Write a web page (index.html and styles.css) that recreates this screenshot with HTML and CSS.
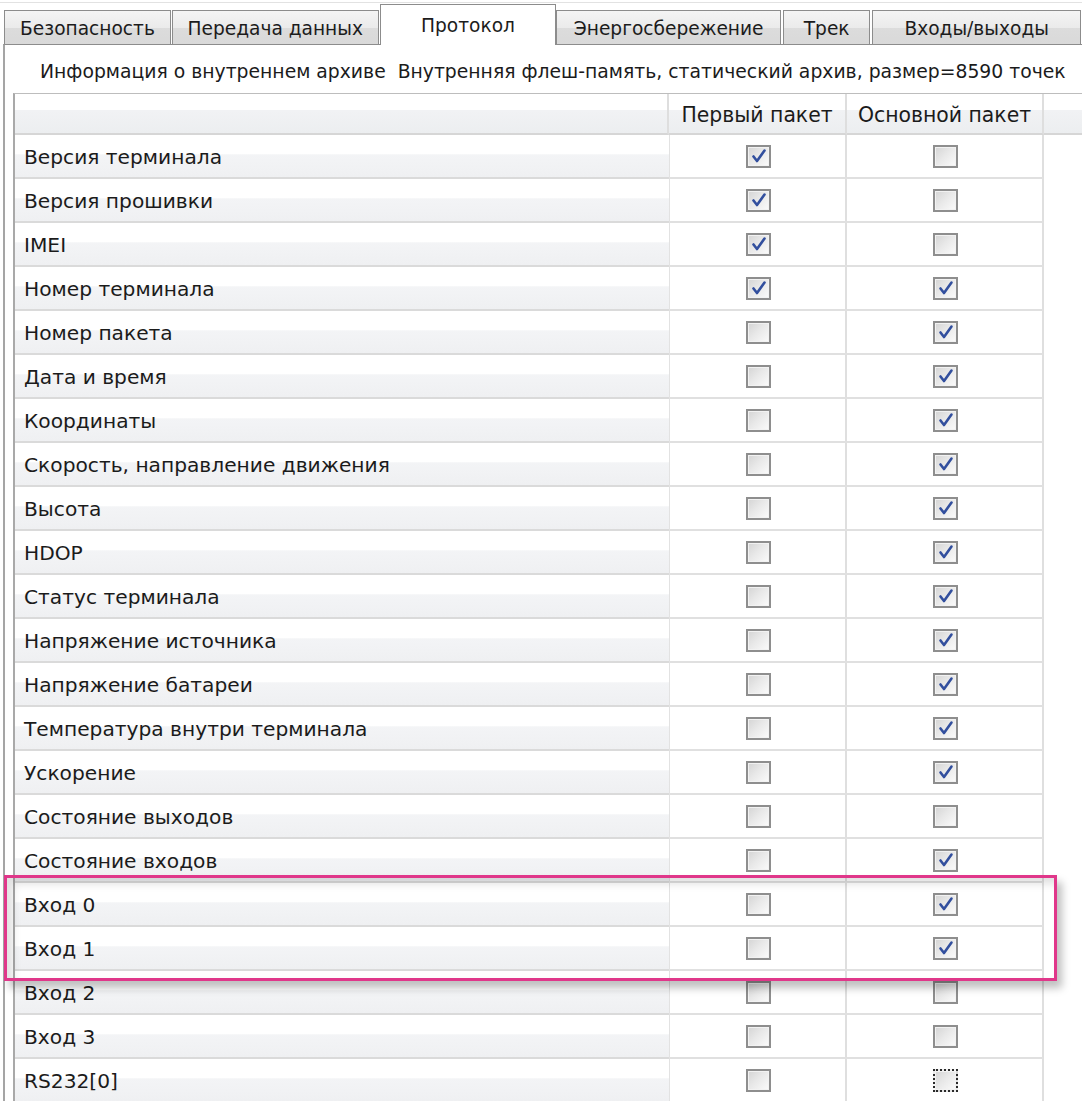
FILE: index.html
```html
<!DOCTYPE html>
<html lang="ru">
<head>
<meta charset="utf-8">
<title>Протокол</title>
<link rel="stylesheet" href="styles.css">
</head>
<body>
<div class="page">
  <div class="topline"></div>
  <div class="tabs">
    <div class="tab t1">Безопасность</div>
    <div class="tab t2">Передача данных</div>
    <div class="tab active t3">Протокол</div>
    <div class="tab t4">Энергосбережение</div>
    <div class="tab t5">Трек</div>
    <div class="tab t6">Входы/выходы</div>
  </div>
  <div class="panel">
    <div class="info">Информация о внутреннем архиве&nbsp; Внутренняя флеш-память, статический архив, размер=8590 точек</div>
    <div class="grid">
      <div class="hcell hlabel"></div>
      <div class="hcell">Первый пакет</div>
      <div class="hcell">Основной пакет</div>
      <div class="hcell hlast"></div>

      <div class="lbl">Версия терминала</div><div class="cb"><span class="box on"></span></div><div class="cb"><span class="box"></span></div><div class="rest"></div>
      <div class="lbl">Версия прошивки</div><div class="cb"><span class="box on"></span></div><div class="cb"><span class="box"></span></div><div class="rest"></div>
      <div class="lbl">IMEI</div><div class="cb"><span class="box on"></span></div><div class="cb"><span class="box"></span></div><div class="rest"></div>
      <div class="lbl">Номер терминала</div><div class="cb"><span class="box on"></span></div><div class="cb"><span class="box on"></span></div><div class="rest"></div>
      <div class="lbl">Номер пакета</div><div class="cb"><span class="box"></span></div><div class="cb"><span class="box on"></span></div><div class="rest"></div>
      <div class="lbl">Дата и время</div><div class="cb"><span class="box"></span></div><div class="cb"><span class="box on"></span></div><div class="rest"></div>
      <div class="lbl">Координаты</div><div class="cb"><span class="box"></span></div><div class="cb"><span class="box on"></span></div><div class="rest"></div>
      <div class="lbl">Скорость, направление движения</div><div class="cb"><span class="box"></span></div><div class="cb"><span class="box on"></span></div><div class="rest"></div>
      <div class="lbl">Высота</div><div class="cb"><span class="box"></span></div><div class="cb"><span class="box on"></span></div><div class="rest"></div>
      <div class="lbl">HDOP</div><div class="cb"><span class="box"></span></div><div class="cb"><span class="box on"></span></div><div class="rest"></div>
      <div class="lbl">Статус терминала</div><div class="cb"><span class="box"></span></div><div class="cb"><span class="box on"></span></div><div class="rest"></div>
      <div class="lbl">Напряжение источника</div><div class="cb"><span class="box"></span></div><div class="cb"><span class="box on"></span></div><div class="rest"></div>
      <div class="lbl">Напряжение батареи</div><div class="cb"><span class="box"></span></div><div class="cb"><span class="box on"></span></div><div class="rest"></div>
      <div class="lbl">Температура внутри терминала</div><div class="cb"><span class="box"></span></div><div class="cb"><span class="box on"></span></div><div class="rest"></div>
      <div class="lbl">Ускорение</div><div class="cb"><span class="box"></span></div><div class="cb"><span class="box on"></span></div><div class="rest"></div>
      <div class="lbl">Состояние выходов</div><div class="cb"><span class="box"></span></div><div class="cb"><span class="box"></span></div><div class="rest"></div>
      <div class="lbl">Состояние входов</div><div class="cb"><span class="box"></span></div><div class="cb"><span class="box on"></span></div><div class="rest"></div>
      <div class="lbl">Вход 0</div><div class="cb"><span class="box"></span></div><div class="cb"><span class="box on"></span></div><div class="rest"></div>
      <div class="lbl">Вход 1</div><div class="cb"><span class="box"></span></div><div class="cb"><span class="box on"></span></div><div class="rest"></div>
      <div class="lbl">Вход 2</div><div class="cb"><span class="box"></span></div><div class="cb"><span class="box"></span></div><div class="rest"></div>
      <div class="lbl">Вход 3</div><div class="cb"><span class="box"></span></div><div class="cb"><span class="box"></span></div><div class="rest"></div>
      <div class="lbl">RS232[0]</div><div class="cb"><span class="box"></span></div><div class="cb"><span class="box focus"></span></div><div class="rest"></div>
    </div>
  </div>
  <div class="highlight"></div>
</div>
</body>
</html>
```

FILE: styles.css
```css
html, body {
  margin: 0;
  padding: 0;
  background: #ffffff;
}
body {
  font-family: "DejaVu Sans", "Noto Sans", sans-serif;
  color: #1b1b1b;
  overflow: hidden;
}
.page {
  position: relative;
  width: 1082px;
  height: 1101px;
  overflow: hidden;
}
.topline {
  height: 2px;
  border-bottom: 1px solid #e2e2e2;
}
.tabs {
  display: flex;
  align-items: flex-end;
  height: 41px;
  padding-left: 4px;
  position: relative;
  z-index: 2;
}
.tab {
  box-sizing: border-box;
  height: 34px;
  border: 1px solid #8c8c8c;
  border-bottom: none;
  background: linear-gradient(#f4f4f4 0%, #ebebeb 50%, #dcdcdc 51%, #d9d9d9 100%);
  font-size: 18.6px;
  display: flex;
  align-items: center;
  justify-content: center;
  padding-top: 1px;
  margin-right: 1px;
  color: #1c1c1c;
  white-space: nowrap;
}
.tab.active {
  background: #ffffff;
  padding-top: 0;
  padding-bottom: 0;
  margin-bottom: -1px;
  height: 41px;
  margin-right: 0;
}
.t1 { width: 168px; }
.t2 { width: 208px; }
.t3 { width: 178px; }
.t4 { width: 226px; }
.t5 { width: 88px; margin-left: 1px; }
.t6 { width: 210px; margin-left: 1px; }

.panel {
  border-top: 1px solid #8c8c8c;
  border-left: 2px solid #a5a5a5;
  margin-left: 3px;
  position: relative;
  z-index: 1;
}
.info {
  height: 48px;
  box-sizing: border-box;
  padding-left: 35px;
  padding-top: 16px;
  font-size: 18.8px;
  white-space: nowrap;
}
.grid {
  margin-left: 8px;
  border-left: 2px solid #a9a9a9;
  border-top: 1px solid #bdbdbd;
  display: grid;
  grid-template-columns: 654px 178px 197px 1fr;
  grid-auto-rows: 44px;
  grid-template-rows: 41px;
}
.hcell {
  box-sizing: border-box;
  background: linear-gradient(#ffffff 0%, #ffffff 40%, #f1f2f4 42%, #eceef0 100%);
  border-right: 2px solid #dedede;
  border-bottom: 2px solid #d6d6d6;
  font-size: 20.4px;
  display: flex;
  align-items: center;
  justify-content: center;
  white-space: nowrap;
  padding-top: 2px;
}
.hcell.hlast { border-right: none; }
.lbl {
  box-sizing: border-box;
  background: linear-gradient(#ffffff 0%, #ffffff 45%, #f3f4f6 47%, #eff0f2 100%);
  border-bottom: 2px solid #dadada;
  font-size: 20.2px;
  display: flex;
  align-items: center;
  padding-left: 9px;
  padding-top: 2px;
  white-space: nowrap;
}
.cb {
  box-sizing: border-box;
  border-left: 1px solid #e2e2e2;
  border-right: 2px solid #dfdfdf;
  border-bottom: 2px solid #e0e0e0;
  display: flex;
  align-items: center;
  justify-content: center;
  background: #ffffff;
}
.cb + .cb { border-left: none; }
.rest { background: #ffffff; }
.box {
  box-sizing: border-box;
  width: 25px;
  height: 23px;
  border: 2px solid #8e8e8e;
  background: linear-gradient(135deg, #d4d4d4 0%, #e8e8e8 45%, #fbfbfb 100%);
  box-shadow: inset 0 0 0 1px #f2f2f2;
  position: relative;
  margin-left: 1px;
}
.box.on::after {
  content: "";
  position: absolute;
  left: 3px;
  top: 1px;
  width: 16px;
  height: 16px;
  background: url("data:image/svg+xml;utf8,<svg xmlns='http://www.w3.org/2000/svg' viewBox='0 0 16 16'><path d='M2.5 8.5 L6 13 L13.5 2.5' fill='none' stroke='%23324f9e' stroke-width='2.6' stroke-linejoin='round' stroke-linecap='round'/></svg>") no-repeat center / 16px 16px;
}
.box.focus {
  border: 2px dotted #2a2a2a;
}
.highlight {
  position: absolute;
  left: 4px;
  top: 875px;
  width: 1053px;
  height: 106px;
  box-sizing: border-box;
  border: 3px solid #e0378a;
  box-shadow: 5px 7px 8px rgba(0,0,0,0.25), inset 6px 6px 8px rgba(0,0,0,0.12);
  z-index: 5;
}
```
